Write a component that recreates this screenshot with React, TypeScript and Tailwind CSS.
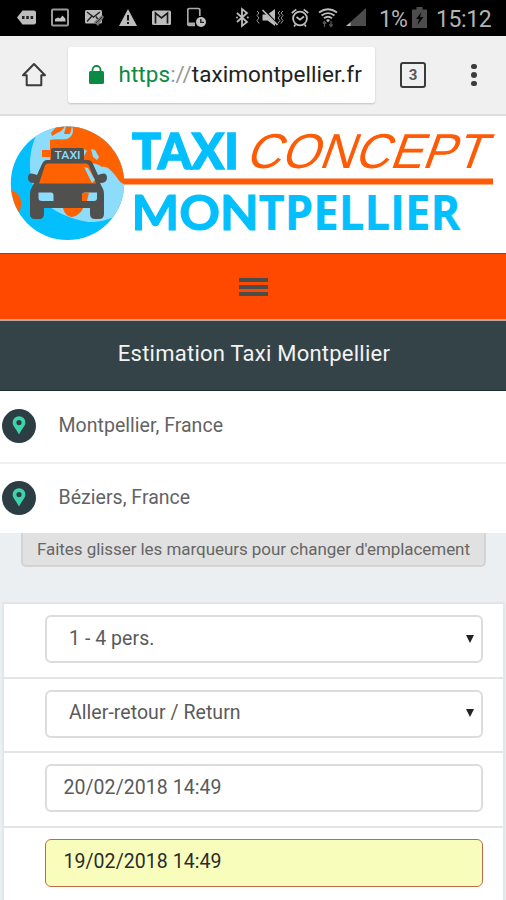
import type { ReactNode } from 'react'
import { clsx } from 'clsx'

const roboto = 'font-[Roboto,sans-serif]'

function StatusIcon({ w, className, children }: { w: number; className?: string; children: ReactNode }) {
  return (
    <svg width={w} height={22} viewBox={`0 0 ${w} 22`} className={clsx('shrink-0', className)}>
      {children}
    </svg>
  )
}

function StatusBar() {
  return (
    <div className={`flex h-9 items-center bg-black pl-[17px] text-[#b4b4b4] ${roboto}`}>
      {/* More notifications */}
      <StatusIcon w={19}>
        <path d="M5.5 3.5H17a2 2 0 0 1 2 2v10a2 2 0 0 1-2 2H5.500L0 10.500z" fill="#bdbdbd" />
        <path d="M5 9h2.500v3H5zM9.300 9h2.500v3H9.300zM13.600 9h2.500v3h-2.500z" fill="#222" />
      </StatusIcon>
      {/* Screenshot */}
      <StatusIcon w={18} className="ml-[15px]">
        <rect x="1" y="2.500" width="16" height="16" rx="1" fill="none" stroke="#999" strokeWidth="2" />
        <path d="M4 14.500v-2.500l3-1.500 2 1 2.500-3 3 3.500v2.500z" fill="#c4c4c4" />
      </StatusIcon>
      {/* Mail, sent */}
      <StatusIcon w={19} className="ml-4">
        <rect x="0" y="3" width="17" height="13.500" rx="1.500" fill="#bdbdbd" />
        <path d="M2 5l6.500 5L15 5M2 14.500l4.500-5M11 9.500l2 3" fill="none" stroke="#222" strokeWidth="1.400" />
        <path d="M9 15l8-7 2 2-6 9z" fill="#777" />
        <path d="M11 16l6-6" stroke="#333" />
      </StatusIcon>
      {/* Warning */}
      <StatusIcon w={18} className="ml-[15px]">
        <path d="M9 2l9 17H0z" fill="#bdbdbd" />
        <path d="M8 8h2v5.500H8zM8 15h2v2H8z" fill="#111" />
      </StatusIcon>
      {/* Gmail */}
      <StatusIcon w={19} className="ml-[15px]">
        <rect x="0" y="3.500" width="19" height="14.500" rx="1.500" fill="#bdbdbd" />
        <path d="M3.500 16.500V6l6 5 6-5v10.500" fill="none" stroke="#1c1c1c" strokeWidth="1.700" />
      </StatusIcon>
      {/* Phone with clock */}
      <StatusIcon w={20} className="ml-4">
        <path d="M8 18.500H2A1.500 1.500 0 0 1 .8 17V3A1.500 1.500 0 0 1 2.300 1.500h9A1.500 1.500 0 0 1 12.800 3v6" fill="none" stroke="#aaa" strokeWidth="1.700" />
        <path d="M1 17h7" stroke="#aaa" strokeWidth="3" />
        <circle cx="14" cy="15" r="5" fill="#c2c2c2" />
        <path d="M13.800 12v3.400H17" fill="none" stroke="#222" strokeWidth="1.400" />
      </StatusIcon>
      {/* Bluetooth */}
      <StatusIcon w={13} className="ml-[29px]">
        <path d="M1 6l10 9-5 4V2l5 4-10 9" fill="none" stroke="#bdbdbd" strokeWidth="1.800" />
        <circle cx="1" cy="10.500" r="1" fill="#bdbdbd" />
        <circle cx="11.800" cy="10.500" r="1" fill="#bdbdbd" />
      </StatusIcon>
      {/* Vibrate / muted */}
      <StatusIcon w={28} className="ml-[7px]">
        <path d="M6.500 7.500h5L19 2v17l-7.500-5.500h-5z" fill="#bdbdbd" />
        <path d="M8 3l14 15" stroke="#000" strokeWidth="2" />
        <path d="M6.500 3l15 15" stroke="#bdbdbd" strokeWidth="1.700" />
        <path d="M1 4l2 2-2 2.500 2 2.500-2 2.500 2 3M24 4l-2 2 2 2.500-2 2.500 2 2.500-2 3M27 4l-2 2 2 2.500-2 2.500 2 2.500-2 3" fill="none" stroke="#999" />
      </StatusIcon>
      {/* Alarm */}
      <StatusIcon w={18} className="ml-[7px]">
        <circle cx="9" cy="11.500" r="6.900" fill="none" stroke="#bdbdbd" strokeWidth="1.800" />
        <path d="M.8 6l4.500-3.700M17.200 6l-4.500-3.700M5.500 10l3.500 2.700 4-3.200M4.500 17.500L3 19.500M13.500 17.500l1.500 2" fill="none" stroke="#bdbdbd" strokeWidth="1.700" />
      </StatusIcon>
      {/* Wifi */}
      <StatusIcon w={20} className="ml-[9px]">
        <path d="M1 5.500q9-6.500 18 0M3.500 8.500q6.500-4.800 13 0M6 11.300q4-3 8 0" fill="none" stroke="#bdbdbd" strokeWidth="1.900" />
        <path d="M8 13q2-1.500 4 0l-2 2.500z" fill="#bdbdbd" />
        <path d="M6.500 20v-5M4.800 16.500l1.700-2 1.700 2M13 14v5M11.300 17.500l1.700 2 1.700-2" fill="none" stroke="#555" strokeWidth="1.300" />
      </StatusIcon>
      {/* Signal */}
      <StatusIcon w={20} className="ml-2">
        <path d="M20 1v18H0z" fill="#4c4c4c" />
        <path d="M4.500 15.500V19H0z" fill="#bdbdbd" />
      </StatusIcon>
      <span className="ml-[13px] mt-[2px] w-[29px] whitespace-nowrap text-[23px] leading-none tracking-[-1px]">1%</span>
      {/* Battery */}
      <StatusIcon w={15} className="ml-[4px]">
        <path d="M0 2.500h4.500V0h6v2.500H15V21H0z" fill="#4c4c4c" />
        <path d="M9.500 5L4 12h3l-1.500 6L11.500 10H8z" fill="#050505" />
      </StatusIcon>
      <span className="ml-[9px] mt-[2px] whitespace-nowrap text-[23px] leading-none tracking-[-0.400px]">15:12</span>
    </div>
  )
}

function BrowserBar() {
  return (
    <div className={`flex h-20 items-center border-b-2 border-[#dedede] bg-[#f0f0f0] ${roboto}`}>
      <svg width="26" height="26" viewBox="0 0 26 26" className="ml-[21px]">
        <path d="M13 2L2 13.300h3.700v10h14.600v-10H24z" fill="none" stroke="#3b3b3b" strokeWidth="2" strokeLinejoin="round" />
      </svg>
      <div className="ml-[21px] flex h-[56px] w-[307px] items-center rounded-[3px] bg-white shadow-[0_1px_2px_rgba(0,0,0,0.2)]">
        <svg width="15" height="20" viewBox="0 0 15 20" className="ml-[21px] shrink-0">
          <rect x="0" y="6" width="15" height="13" rx="1.500" fill="#0b8a43" />
          <path d="M3.500 7V5a4 4 0 0 1 8 0v2" fill="none" stroke="#0b8a43" strokeWidth="1.800" />
        </svg>
        <span className="ml-[14.500px] whitespace-nowrap text-[22.500px] tracking-[0.050px] text-[#222]">
          <span className="text-[#0b8a43]">https</span>
          <span className="text-[#999]">://</span>taximontpellier.fr
        </span>
      </div>
      <div className="ml-[25px] flex h-[26px] w-[26px] items-center justify-center rounded-[3px] border-2 border-[#3b3b3b] text-[15px] font-bold leading-none text-[#555]">
        3
      </div>
      <div className="ml-[45px] flex flex-col gap-[3px]">
        <i className="size-[5.500px] rounded-full bg-[#3b3b3b]" />
        <i className="size-[5.500px] rounded-full bg-[#3b3b3b]" />
        <i className="size-[5.500px] rounded-full bg-[#3b3b3b]" />
      </div>
    </div>
  )
}

function Logo() {
  return (
    <svg width="506" height="137" viewBox="0 116 506 137" className="block">
      <clipPath id="globe">
        <circle cx="67.500" cy="183.300" r="56.700" />
      </clipPath>
      <g clipPath="url(#globe)">
        <rect x="10" y="126" width="116" height="115" fill="#03bffe" />
        <path d="M42 126C26 147 28 178 36 192c10 15 25 25 52 30 15 0 25-3 38-12V126z" fill="#8edcfb" />
        <path d="M72 126h54v58c-6 0-7-4-11-9-4-4-7-9-13-8-6-5-12-3-18-5H50V140c7-2 13 1 19-2 4-3 5-7 3-12z" fill="#ff6200" />
        <path d="M42 150h9v7h-9zM51 133l6-7h8c-2 4-5 6-8 7l-5 3z" fill="#ff6200" />
        <path d="M66 126h6l-2 8h-6z" fill="#ff6200" />
        <path d="M91 149l4 1 4 7-2 3-4-3zM84 149l3 2-3 5-2-4z" fill="#8edcfb" />
        <path d="M10 189l7 4c5 5 5 12 2 21H10zM63 208h20c-2 5-6 8-11 9-4 0-8-4-9-9z" fill="#ff6200" />
      </g>
      {/* Cab */}
      <path
        d="M53 148h29q2 0 2 2v10h4q3 0 5 4l5 11 3-1q6-2 6 4 0 5-7 5l3 6q1 2 1 5v20q0 5-5 5h-4q-5 0-5-5v-6H44v6q0 5-5 5h-4q-5 0-5-5V194q0-3 1-5l3-6q-6 0-6-5 0-6 6-4l3 1 5-11q2-4 5-4h4v-10q0-2 2-2z"
        fill="#50504f"
      />
      <path d="M48 163.500h38q2 0 3 2l7 18H39l6-18q1-2 3-2z" fill="#ff6200" />
      <path d="M84 167l4 1 7 12-3 3z" fill="#8edcfb" />
      <path d="M38.500 192.500H51q2.500 0 2.500 3v5.500H42q-3.500 0-3.500-3z" fill="#8edcfb" />
      <path d="M97 192.500H85q-3 0-3 3v5.500h12q3 0 3-3z" fill="#8edcfb" />
      <path d="M89 192.500h-4q-3 0-3 3v5.500h5z" fill="#ff6200" />
      <text x="54.500" y="159.300" textLength="26" lengthAdjust="spacingAndGlyphs" fontSize="11.500" fontWeight="500" fill="#8edcfb" className={roboto}>
        TAXI
      </text>
      <path d="M122 178.500h371v6H124z" fill="#ff5a05" />
      <g fill="#03bffe" stroke="#03bffe">
        <text x="132" y="169" textLength="107" lengthAdjust="spacingAndGlyphs" fontSize="49" fontWeight="900" strokeWidth="1.400" className="font-[Lato,sans-serif]">
          TAXI
        </text>
        <text x="131.500" y="229.700" textLength="127.500" lengthAdjust="spacingAndGlyphs" fontSize="48" fontWeight="700" strokeWidth="1" className="font-[Lato,sans-serif]">
          MON
        </text>
        <text x="258.500" y="230" textLength="202" lengthAdjust="spacingAndGlyphs" fontSize="48.500" fontWeight="700" strokeWidth="0.200" className="font-['Open_Sans',sans-serif]">
          TPELLIER
        </text>
      </g>
      <text
        transform="translate(244.500 167.700) skewX(-20)"
        textLength="239"
        lengthAdjust="spacingAndGlyphs"
        fontSize="49"
        fill="#ff5a05"
        className="font-['Liberation_Sans',sans-serif]"
      >
        CONCEPT
      </text>
    </svg>
  )
}

function PlaceRow({ label, className }: { label: string; className?: string }) {
  return (
    <div className={clsx('flex items-center bg-white pl-[2px]', className)}>
      <svg width="34" height="34" viewBox="0 0 34 34">
        <circle cx="17" cy="17" r="17" fill="#2c3e43" />
        <path
          d="M17 7.200a6.400 6.400 0 0 0-6.400 6.400c0 3.500 3.400 6 6.400 12 3-6 6.400-8.500 6.400-12A6.400 6.400 0 0 0 17 7.200zm0 3.800a2.600 2.600 0 1 1 0 5.200 2.600 2.600 0 0 1 0-5.200z"
          fill="#3fd3ac"
          fillRule="evenodd"
        />
      </svg>
      <span className="ml-[22.500px] text-[19.500px] tracking-[0.030px] text-[#636363]">{label}</span>
    </div>
  )
}

interface FieldProps {
  value: string
  select?: boolean
  error?: boolean
}

const fields: FieldProps[] = [
  { value: '1 - 4 pers.', select: true },
  { value: 'Aller-retour / Return', select: true },
  { value: '20/02/2018 14:49' },
  { value: '19/02/2018 14:49', error: true },
]

function Field({ value, select, error }: FieldProps) {
  return (
    <div className="h-[74.500px] border-t-2 border-[#e2e5e7] pl-[41px] pr-[20px] pt-[11px]">
      <div
        className={clsx(
          'flex h-[48px] items-center justify-between rounded-[6px] pr-[7px] text-[19.500px] tracking-[0.050px]',
          select ? 'pl-[22px]' : error ? 'pl-[17.500px]' : 'pl-[16.500px]',
          error ? 'border border-[#bd6a48] bg-[#f9fdbc] text-[#2b2b2b]' : 'border-2 border-[#dcdcdc] bg-white text-[#5a5a5a]',
        )}
      >
        <span className="-mt-px whitespace-nowrap">{value}</span>
        {select && (
          <svg width="8" height="8" viewBox="0 0 8 8" className="-mt-px">
            <path d="M0 0h8L4 8z" fill="#222" />
          </svg>
        )}
      </div>
    </div>
  )
}

export default function App() {
  return (
    <div className={`flex h-[900px] w-[506px] flex-col overflow-hidden bg-[#ebeff2] ${roboto}`}>
      <div className="shrink-0">
        <StatusBar />
        <BrowserBar />
        <div className="bg-white">
          <Logo />
        </div>
        <div className="flex h-[66px] flex-col items-center border-t border-[#f01c00] bg-[#ff4800] pt-[24px]">
          <div className="flex w-[29px] flex-col gap-[3px]">
            <i className="h-1 bg-[#4b4d4b]" />
            <i className="h-1 bg-[#4b4d4b]" />
            <i className="h-1 bg-[#4b4d4b]" />
          </div>
        </div>
        <div className="h-[72px] border-t-2 border-b border-t-[#b9a9a6] border-b-[#1d2f33] bg-[#344348] pl-[2px] pt-[17px] text-center text-[22px] leading-[32px] tracking-[0.240px] text-[#f3f3f3]">
          Estimation Taxi Montpellier
        </div>
        <PlaceRow label="Montpellier, France" className="h-[73px] border-b-2 border-[#f0f0f0] pb-px" />
        <PlaceRow label="Béziers, France" className="h-[69px] pb-[2px]" />
        <div className="h-[69px]">
          <div className="ml-[21px] flex h-[34px] w-[465px] justify-center rounded-b-[5px] border-2 border-t-0 border-[#d3d3d3] bg-[#e1e1e1] pt-[3px] text-[17px] leading-[26px] tracking-[-0.060px] text-[#666]">
            <span className="whitespace-nowrap">Faites glisser les marqueurs pour changer d'emplacement</span>
          </div>
        </div>
        <div className="ml-[2px] mr-[1px] border-x-2 border-[#e2e7ea] bg-white">
          {fields.map((f) => (
            <Field key={f.value} {...f} />
          ))}
        </div>
      </div>
    </div>
  )
}
